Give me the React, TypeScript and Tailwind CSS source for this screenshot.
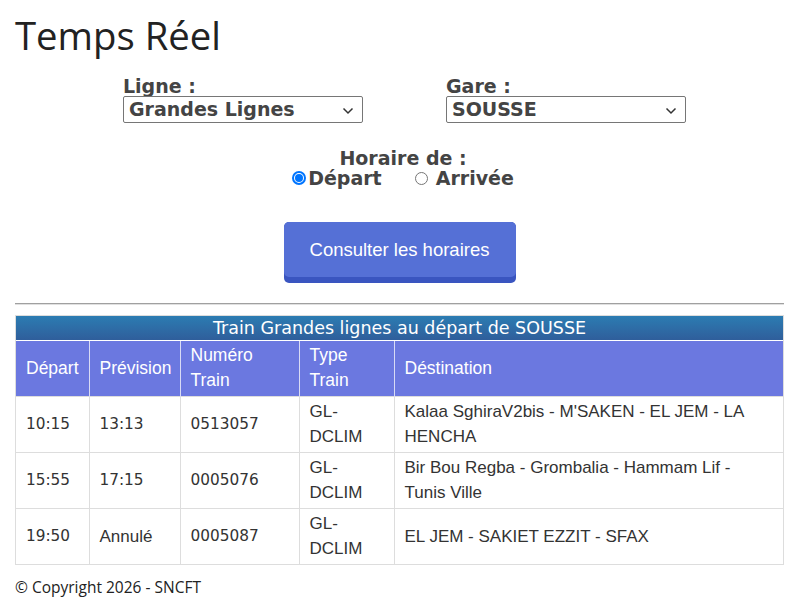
import React from "react";

const rows = [
  { dep: "10:15", prev: "13:13", num: "0513057", type: ["GL-", "DCLIM"], dest: "Kalaa SghiraV2bis - M'SAKEN - EL JEM - LA HENCHA" },
  { dep: "15:55", prev: "17:15", num: "0005076", type: ["GL-", "DCLIM"], dest: "Bir Bou Regba - Grombalia - Hammam Lif - Tunis Ville" },
  { dep: "19:50", prev: "Annulé", num: "0005087", type: ["GL-", "DCLIM"], dest: "EL JEM - SAKIET EZZIT - SFAX" },
];

function Chevron() {
  return (
    <svg width="12" height="8" viewBox="0 0 12 8" className="absolute right-[8px] top-[10px]">
      <path d="M1.5 1.5 L6 6 L10.5 1.5" fill="none" stroke="#333" strokeWidth="1.5" />
    </svg>
  );
}

function Select({ value }: { value: string }) {
  return (
    <div className="relative w-[240px] h-[27px] border border-[#767676] rounded-[2px] bg-white">
      <div className="pl-[5px] text-[19px] leading-[25px] font-bold text-[#444]">{value}</div>
      <Chevron />
    </div>
  );
}

export default function App() {
  return (
    <div className="w-[795px] h-[606px] bg-white pl-[15px] pr-[11px] font-['Open_Sans',sans-serif] text-[#222]">
      <h1 className="pt-[10px] text-[38.3px] leading-[50px] text-[#222]">Temps Réel</h1>
      <div className="font-['DejaVu_Sans',Verdana,sans-serif] flex mt-[17px] pl-[108px] gap-[83px] text-[#444]">
        <div className="flex flex-col">
          <div className="text-[19px] leading-[19px] font-bold">Ligne :</div>
          <Select value="Grandes Lignes" />
        </div>
        <div className="flex flex-col">
          <div className="text-[19px] leading-[19px] font-bold">Gare :</div>
          <Select value="SOUSSE" />
        </div>
      </div>
      <div className="font-['DejaVu_Sans',Verdana,sans-serif] flex flex-col items-center mt-[25px] pl-[7px] text-[#444] font-bold text-[19px]">
        <div className="leading-[20px]">Horaire de :</div>
        <div className="flex items-center leading-[20px]">
          <span className="w-[14px] h-[14px] rounded-full border-2 border-[#0075ff] flex items-center justify-center mr-[2px]">
            <span className="w-[8px] h-[8px] rounded-full bg-[#0075ff]" />
          </span>
          <span>Départ</span>
          <span className="w-[13px] h-[13px] rounded-full border border-[#767676] ml-[33px] mr-[8px]" />
          <span>Arrivée</span>
        </div>
      </div>
      <div className="flex justify-center mt-[34px]">
        <div className="w-[232px] h-[61px] rounded-[5px] bg-[#3a55c0] pb-[6px]">
          <div className="h-[55px] rounded-[5px] bg-[#5570d6] flex items-center justify-center text-white text-[18.5px] font-['Liberation_Sans',Arial,sans-serif]">
            Consulter les horaires
          </div>
        </div>
      </div>
      <div className="mt-[20px] h-[2px] bg-[#a0a0a0] border-b border-[#e0e0e0]" />
      <div className="mt-[10px] border border-[#ddd]">
        <div className="font-['DejaVu_Sans',Verdana,sans-serif] h-[25px] bg-gradient-to-b from-[#2b7cb2] to-[#2f5e9b] text-white text-[17.5px] leading-[25px] text-center border-b border-white">
          Train Grandes lignes au départ de SOUSSE
        </div>
        <table className="w-full table-fixed border-collapse font-['Liberation_Sans',Arial,sans-serif] text-[17px] leading-[25px]">
          <colgroup>
            <col className="w-[73px]" />
            <col className="w-[91px]" />
            <col className="w-[119px]" />
            <col className="w-[95px]" />
            <col />
          </colgroup>
          <thead>
            <tr className="bg-[#6b78e0] text-white h-[55px] text-[17.5px]">
              <th className="text-left font-normal px-[10px] align-middle border-r border-[#d8dbf5]">Départ</th>
              <th className="text-left font-normal px-[10px] align-middle border-r border-[#d8dbf5]">Prévision</th>
              <th className="text-left font-normal px-[10px] align-middle border-r border-[#d8dbf5]">Numéro<br />Train</th>
              <th className="text-left font-normal px-[10px] align-middle border-r border-[#d8dbf5]">Type<br />Train</th>
              <th className="text-left font-normal px-[10px] align-middle">Déstination</th>
            </tr>
          </thead>
          <tbody className="text-[#333]">
            {rows.map((r) => (
              <tr key={r.num} className="h-[56px] border-t border-[#ddd]">
                <td className="px-[10px] border-r border-[#ddd] font-['DejaVu_Sans',sans-serif] text-[15.3px]">{r.dep}</td>
                {r.prev === "Annulé" ? (
                  <td className="px-[10px] border-r border-[#ddd]">Annulé</td>
                ) : (
                  <td className="px-[10px] border-r border-[#ddd] font-['DejaVu_Sans',sans-serif] text-[15.3px]">{r.prev}</td>
                )}
                <td className="px-[10px] border-r border-[#ddd] font-['DejaVu_Sans',sans-serif] text-[15.3px]">{r.num}</td>
                <td className="px-[10px] border-r border-[#ddd]">{r.type[0]}<br />{r.type[1]}</td>
                <td className="px-[10px]">{r.dest}</td>
              </tr>
            ))}
          </tbody>
        </table>
      </div>
      <div className="mt-[12px] text-[15.5px] leading-[20px] text-[#222]">© Copyright 2026 - SNCFT</div>
    </div>
  );
}
